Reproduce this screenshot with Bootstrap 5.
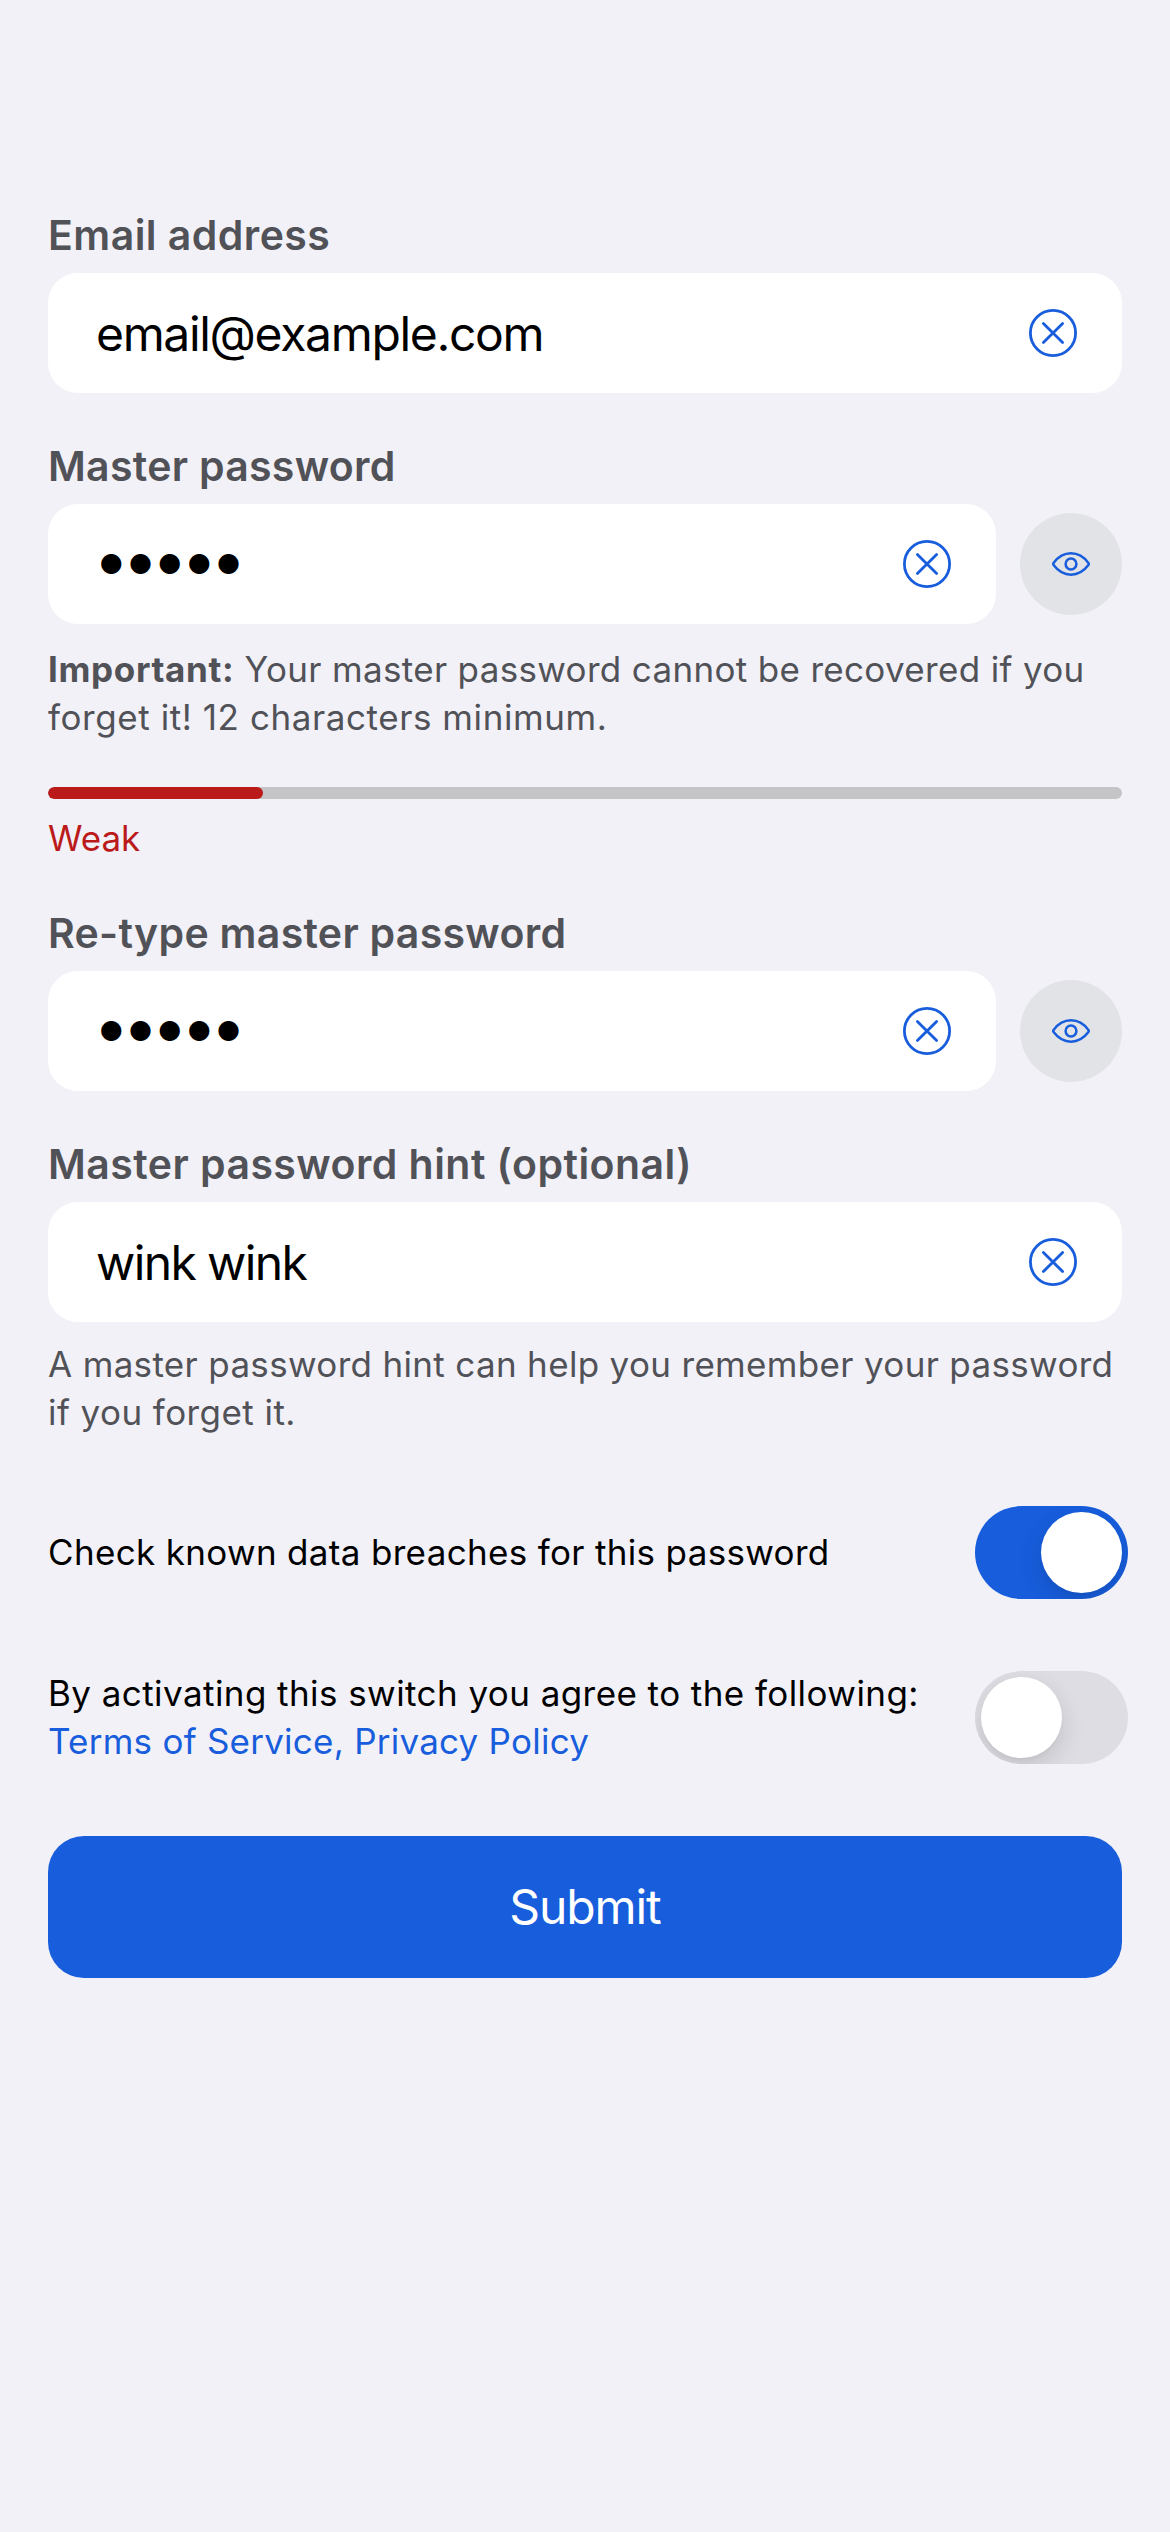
<!DOCTYPE html>
<html lang="en">
<head>
<meta charset="utf-8">
<meta name="viewport" content="width=device-width, initial-scale=1">
<title>Create account</title>
<link href="https://cdn.jsdelivr.net/npm/bootstrap@5.3.0/dist/css/bootstrap.min.css" rel="stylesheet">
<style>
  :root { --brand: #175ddc; --muted: #515158; }
  body { background: #f2f1f7; font-family: Inter, "Liberation Sans", sans-serif; color: #000; }
  .signup { padding: 210px 48px 0; }
  .field-group { margin-bottom: 48px; }
  .field-label { font-size: 41px; line-height: 50px; font-weight: 600; color: var(--muted); letter-spacing: .45px; margin-bottom: 13px; }
  .field-label.label-tight { letter-spacing: .3px; }
  .field-box { height: 120px; border-radius: 30px; padding: 0 45px 0 48px; }
  .field-value { font-size: 48px; line-height: 120px; letter-spacing: -1.33px; padding-top: 2px; }
  .field-value.hint-value { letter-spacing: -1.6px; }
  .field-value.dots { font-size: 26.8px; letter-spacing: 4.8px; padding: 0 0 0 3px; }
  .icon-btn { line-height: 0; color: var(--brand); }
  .eye-btn { width: 102px; height: 102px; background: #e1e3e7; color: var(--brand); margin-left: 24px; }
  .copy { font-size: 35px; line-height: 48px; letter-spacing: .33px; white-space: nowrap; }
  .copy-muted { color: var(--muted); }
  .copy-bold { font-weight: 700; letter-spacing: .65px; }
  .note-important { margin-top: 21px; }
  .note-hint { margin-top: 18px; }
  .track-wide { letter-spacing: .57px; }
  .track-mid { letter-spacing: .43px; }
  .track-tight { letter-spacing: .24px; }
  .strength { margin-top: 46px; height: 12px; border-radius: 6px; background: #c5c5c8; }
  .strength .progress-bar { background: #bb1a1a; border-radius: 6px; }
  .strength-text { margin-top: 15px; margin-bottom: 46px; color: #bb1a1a; letter-spacing: 0; }
  .switch-row { height: 93px; margin-top: 72px; }
  .switch-row .copy { margin-bottom: 2px; }
  .first-switch { margin-top: 70px; }
  .toggle { width: 153px; height: 93px; border-radius: 47px; padding: 6px; margin-right: -6px; background: #dedde3; overflow: hidden; }
  .toggle.on { background: var(--brand); }
  .knob { width: 81px; height: 81px; box-shadow: 0 9px 24px rgba(0,0,0,.13), 0 3px 3px rgba(0,0,0,.02); }
  .submit-btn { height: 142px; margin-top: 72px; border-radius: 36px; font-size: 48px; letter-spacing: -1.1px; line-height: 142px; padding: 0; background: var(--brand); border: 0; color: #fff; }
  .terms-link { color: var(--brand); }
</style>
</head>
<body>
<svg class="d-none" xmlns="http://www.w3.org/2000/svg">
  <symbol id="clear" viewBox="0 0 48 48"><g fill="none" stroke="currentColor" stroke-width="2.8" stroke-linecap="round"><circle cx="24" cy="24" r="22.6"/><path d="M14.4 14.4 33.6 33.6M33.6 14.4 14.4 33.6"/></g></symbol>
  <symbol id="eye" viewBox="0 0 38 24"><g fill="none" stroke="currentColor" stroke-width="2.5" stroke-linejoin="round"><path d="M1.6 10.9C6 5 12 1.3 19 1.3S32 5 36.4 10.9Q37.2 12 36.4 13.1C32 19 26 22.7 19 22.7S6 19 1.6 13.1Q.8 12 1.6 10.9Z"/><circle cx="19" cy="12" r="5.4"/></g></symbol>
</svg>
<main class="signup">
  <div class="field-group">
    <div class="field-label">Email address</div>
    <div class="field-box bg-white d-flex align-items-center justify-content-between">
      <span class="field-value">email@example.com</span>
      <span class="icon-btn" role="button" aria-label="Clear"><svg width="48" height="48"><use href="#clear"/></svg></span>
    </div>
  </div>

  <div>
    <div class="field-label label-tight">Master password</div>
    <div class="d-flex align-items-center">
      <div class="field-box bg-white d-flex align-items-center justify-content-between flex-grow-1">
        <span class="field-value dots">●●●●●</span>
        <span class="icon-btn" role="button" aria-label="Clear"><svg width="48" height="48"><use href="#clear"/></svg></span>
      </div>
      <div class="eye-btn rounded-circle d-flex align-items-center justify-content-center flex-shrink-0" role="button" aria-label="Show"><svg width="38" height="24"><use href="#eye"/></svg></div>
    </div>
    <div class="copy copy-muted note-important"><span class="copy-bold">Important:</span> Your master password cannot be recovered if you<br><span class="track-wide">forget it! 12 characters minimum.</span></div>
    <div class="progress strength"><div class="progress-bar" style="width:20%"></div></div>
    <div class="copy strength-text">Weak</div>
  </div>

  <div class="field-group">
    <div class="field-label label-tight">Re-type master password</div>
    <div class="d-flex align-items-center">
      <div class="field-box bg-white d-flex align-items-center justify-content-between flex-grow-1">
        <span class="field-value dots">●●●●●</span>
        <span class="icon-btn" role="button" aria-label="Clear"><svg width="48" height="48"><use href="#clear"/></svg></span>
      </div>
      <div class="eye-btn rounded-circle d-flex align-items-center justify-content-center flex-shrink-0" role="button" aria-label="Show"><svg width="38" height="24"><use href="#eye"/></svg></div>
    </div>
  </div>

  <div>
    <div class="field-label">Master password hint (optional)</div>
    <div class="field-box bg-white d-flex align-items-center justify-content-between">
      <span class="field-value hint-value">wink wink</span>
      <span class="icon-btn" role="button" aria-label="Clear"><svg width="48" height="48"><use href="#clear"/></svg></span>
    </div>
    <div class="copy copy-muted note-hint">A master password hint can help you remember your password<br><span class="track-mid">if you forget it.</span></div>
  </div>

  <div class="switch-row first-switch d-flex align-items-center justify-content-between">
    <div class="copy">Check known data breaches for this password</div>
    <div class="toggle on d-flex justify-content-end flex-shrink-0" role="switch" aria-checked="true"><div class="knob bg-white rounded-circle"></div></div>
  </div>

  <div class="switch-row d-flex align-items-center justify-content-between">
    <div class="copy"><span class="track-mid">By activating this switch you agree to the following:</span><br><span class="terms-link track-tight">Terms of Service, Privacy Policy</span></div>
    <div class="toggle d-flex flex-shrink-0" role="switch" aria-checked="false"><div class="knob bg-white rounded-circle"></div></div>
  </div>

  <button class="btn submit-btn w-100 d-block" type="button">Submit</button>
</main>
<script src="https://cdn.jsdelivr.net/npm/bootstrap@5.3.0/dist/js/bootstrap.bundle.min.js"></script>
</body>
</html>
